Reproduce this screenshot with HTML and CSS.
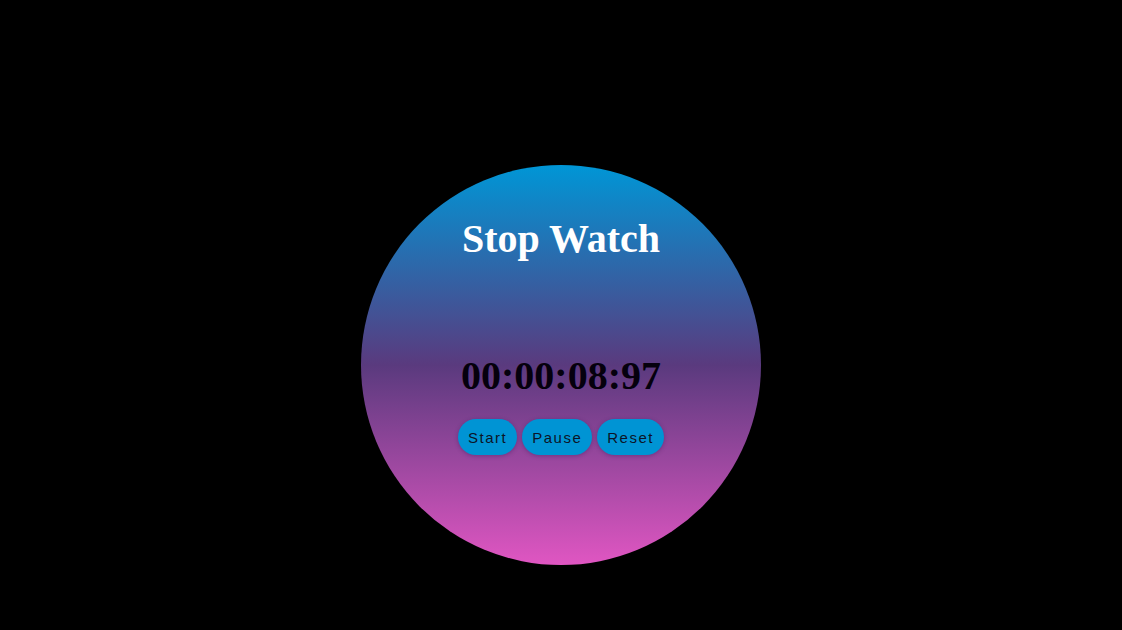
FILE: index.html
```html
<!DOCTYPE html>
<html>
<head>
<meta charset="utf-8">
<link rel="stylesheet" href="styles.css">
</head>
<body>
<div class="page">
  <div class="watch">
    <h1 class="title">Stop Watch</h1>
    <div class="time">00:00:08:97</div>
    <div class="controls">
      <button class="btn">Start</button>
      <button class="btn">Pause</button>
      <button class="btn">Reset</button>
    </div>
  </div>
</div>
</body>
</html>
```
FILE: styles.css
```css
html, body {
  margin: 0;
  padding: 0;
  background: #000;
  height: 100%;
}
.page {
  display: flex;
  justify-content: center;
  padding-top: 165px;
}
.watch {
  width: 400px;
  height: 400px;
  border-radius: 50%;
  background: linear-gradient(to bottom, #0096d6 0%, #5a3a7e 50%, #e056c2 100%);
  display: flex;
  flex-direction: column;
  align-items: center;
  font-family: "Liberation Serif", "Times New Roman", serif;
}
.title {
  margin: 51px 0 0 0;
  font-size: 40px;
  line-height: 46px;
  font-weight: bold;
  color: #fff;
}
.time {
  margin-top: 91px;
  font-size: 40px;
  line-height: 46px;
  font-weight: bold;
  color: #05000d;
}
.controls {
  display: flex;
  gap: 5px;
  margin-top: 20px;
}
.btn {
  height: 36px;
  padding: 0 10px;
  border: none;
  border-radius: 18px;
  background: #0094d4;
  color: #0c1428;
  font-family: "Liberation Sans", Arial, sans-serif;
  font-size: 15px;
  letter-spacing: 1.5px;
  box-shadow: 0 1px 4px rgba(40, 20, 80, 0.35);
  cursor: pointer;
}
```
